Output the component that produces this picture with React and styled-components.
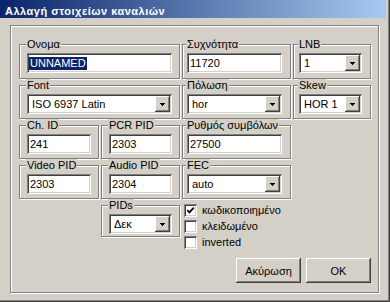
import React from "react";
import styled, { createGlobalStyle, css } from "styled-components";

const GlobalStyle = createGlobalStyle`
  html, body {
    margin: 0;
    padding: 0;
    background: #d4d0c8;
  }
  body {
    font-family: "Liberation Sans", Arial, sans-serif;
    font-size: 11px;
    color: #000;
  }
`;

// classic 3d edges
const sunken = css`
  box-shadow: inset 1px 1px #808080, inset -1px -1px #ffffff,
    inset 2px 2px #404040, inset -2px -2px #d4d0c8;
`;
const raised = css`
  box-shadow: inset -1px -1px #404040, inset 1px 1px #ffffff,
    inset -2px -2px #808080, inset 2px 2px #d4d0c8;
`;
const etched = css`
  border: 1px solid #808080;
  box-shadow: inset 1px 1px #ffffff, 1px 1px #ffffff;
`;

const Window = styled.div`
  width: 390px;
  height: 302px;
  box-sizing: border-box;
  background: #d4d0c8;
  border-right: 1px solid #404040;
  border-bottom: 1px solid #404040;
  box-shadow: inset -1px -1px #808080;
  padding-right: 3px;
  display: flex;
  flex-direction: column;
`;

const TitleBar = styled.div`
  height: 18px;
  box-sizing: border-box;
  padding: 4px 0 0 5px;
  display: flex;
  align-items: center;
  background: linear-gradient(to right, #0a246a, #a6caf0);
  color: #fff;
  font-weight: bold;
  font-size: 11px;
  letter-spacing: 0.5px;
  white-space: nowrap;
`;

const Body = styled.div`
  padding: 7px 0 0 10px;
`;

const Panel = styled.div`
  width: 369px;
  height: 268px;
  box-sizing: border-box;
  ${etched};
  padding: 12px 0 0 8px;
`;

const FormGrid = styled.div`
  display: grid;
  grid-template-columns: 80px 79px 109px 78px;
  grid-template-rows: 41px 40px 40px 40px auto auto;
  column-gap: 2px;
`;

const Group = styled.fieldset`
  margin: 0;
  min-width: 0;
  box-sizing: border-box;
  ${etched};
  padding: ${(p) => p.$pad || "2px 7px 4px 7px"};
  grid-column: ${(p) => p.$col || "auto"};
  align-self: ${(p) => p.$align || "stretch"};
`;

const Label = styled.legend`
  padding: 0 1px;
  margin-left: -1px;
  line-height: 13px;
  background: #d4d0c8;
  white-space: nowrap;
`;

const TextBox = styled.div`
  height: 20px;
  box-sizing: border-box;
  background: #fff;
  ${sunken};
  padding-left: 2px;
  display: flex;
  align-items: center;
  overflow: hidden;
  white-space: nowrap;
`;

const Value = styled.span`
  padding: 0 1px;
  line-height: 13px;
  background: ${(p) => (p.$selected ? "#0a246a" : "transparent")};
  color: ${(p) => (p.$selected ? "#fff" : "#000")};
`;

const ComboBox = styled.div`
  height: 20px;
  box-sizing: border-box;
  background: #fff;
  ${sunken};
  padding: 2px;
  display: flex;
  align-items: center;
`;

const ComboText = styled.span`
  flex: 1;
  padding-left: 3px;
  white-space: nowrap;
  overflow: hidden;
`;

const DropButton = styled.span`
  width: 15px;
  height: 16px;
  background: #d4d0c8;
  ${raised};
  display: flex;
  align-items: center;
  justify-content: center;
`;

const CheckList = styled.div`
  grid-column: 3 / 5;
  padding: 5px 0 0 2px;
  display: flex;
  flex-direction: column;
  gap: 3px;
`;

const CheckRow = styled.label`
  display: flex;
  align-items: center;
  gap: 5px;
  height: 13px;
  line-height: 13px;
  white-space: nowrap;
`;

const CheckBox = styled.span`
  width: 13px;
  height: 13px;
  box-sizing: border-box;
  background: #fff;
  ${sunken};
  display: flex;
  flex: none;
`;

const ButtonRow = styled.div`
  grid-column: 3 / 5;
  margin-top: 9px;
  display: flex;
  justify-content: flex-end;
  gap: 5px;
`;

const Button = styled.button`
  width: 65px;
  height: 25px;
  box-sizing: border-box;
  border: none;
  background: #d4d0c8;
  ${raised};
  font-family: "Liberation Sans", Arial, sans-serif;
  font-size: 11px;
  color: #000;
  padding: 0;
`;

function Arrow() {
  return (
    <svg width="5" height="3" viewBox="0 0 5 3" shapeRendering="crispEdges">
      <polygon points="0,0 5,0 2.5,3" fill="#000" />
    </svg>
  );
}

function Combo({ value }) {
  return (
    <ComboBox>
      <ComboText>{value}</ComboText>
      <DropButton>
        <Arrow />
      </DropButton>
    </ComboBox>
  );
}

function Check({ checked, children }) {
  return (
    <CheckRow>
      <CheckBox>
        {checked && (
          <svg width="13" height="13" viewBox="0 0 13 13">
            <path d="M3.2 6 L5.4 8.4 L9.8 3.6" fill="none" stroke="#000" strokeWidth="1.8" />
          </svg>
        )}
      </CheckBox>
      {children}
    </CheckRow>
  );
}

const mid = "2px 8px 4px 4px";
const right = "2px 8px 4px 5px";

export default function App() {
  return (
    <>
      <GlobalStyle />
      <Window>
        <TitleBar>Αλλαγή στοιχείων καναλιών</TitleBar>
        <Body>
          <Panel>
            <FormGrid>
              <Group $col="1 / 3">
                <Label>Ονομα</Label>
                <TextBox>
                  <Value $selected>UNNAMED</Value>
                </TextBox>
              </Group>
              <Group $pad={mid}>
                <Label>Συχνότητα</Label>
                <TextBox>
                  <Value>11720</Value>
                </TextBox>
              </Group>
              <Group $pad={right}>
                <Label>LNB</Label>
                <Combo value="1" />
              </Group>

              <Group $col="1 / 3">
                <Label>Font</Label>
                <Combo value="ISO 6937 Latin" />
              </Group>
              <Group $pad={mid}>
                <Label>Πόλωση</Label>
                <Combo value="hor" />
              </Group>
              <Group $pad={right}>
                <Label>Skew</Label>
                <Combo value="HOR 1" />
              </Group>

              <Group>
                <Label>Ch. ID</Label>
                <TextBox>
                  <Value>241</Value>
                </TextBox>
              </Group>
              <Group>
                <Label>PCR PID</Label>
                <TextBox>
                  <Value>2303</Value>
                </TextBox>
              </Group>
              <Group $pad={mid}>
                <Label>Ρυθμός συμβόλων</Label>
                <TextBox>
                  <Value>27500</Value>
                </TextBox>
              </Group>

              <Group $col="1">
                <Label>Video PID</Label>
                <TextBox>
                  <Value>2303</Value>
                </TextBox>
              </Group>
              <Group>
                <Label>Audio PID</Label>
                <TextBox>
                  <Value>2304</Value>
                </TextBox>
              </Group>
              <Group $pad={mid}>
                <Label>FEC</Label>
                <Combo value="auto" />
              </Group>

              <Group $col="2" $align="start" $pad="2px 7px 2px 7px">
                <Label>PIDs</Label>
                <Combo value="Δεκ" />
              </Group>
              <CheckList>
                <Check checked>κωδικοποιημένο</Check>
                <Check>κλειδωμένο</Check>
                <Check>inverted</Check>
              </CheckList>

              <ButtonRow>
                <Button>Ακύρωση</Button>
                <Button>OK</Button>
              </ButtonRow>
            </FormGrid>
          </Panel>
        </Body>
      </Window>
    </>
  );
}
